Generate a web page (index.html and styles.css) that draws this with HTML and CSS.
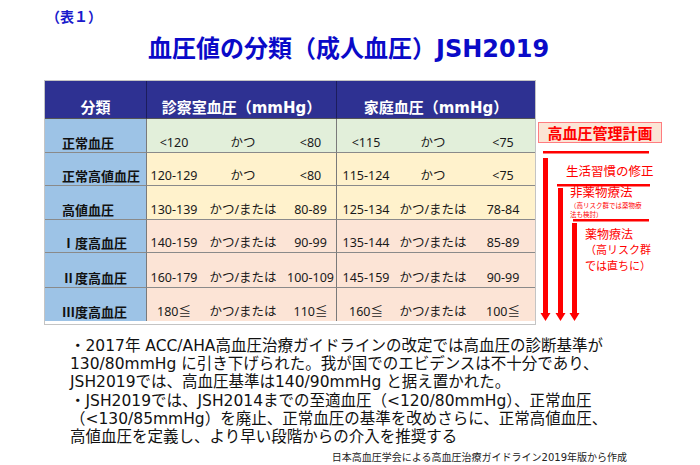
FILE: index.html
```html
<!DOCTYPE html>
<html lang="ja">
<head>
<meta charset="utf-8">
<link rel="stylesheet" href="styles.css">
</head>
<body>
<div class="page">
  <p class="tag">（表１）</p>
  <h1 class="title">血圧値の分類（成人血圧）JSH2019</h1>
  <div class="main">
    <div class="bp">
      <div class="hd cat">分類</div>
      <div class="hd">診察室血圧（mmHg）</div>
      <div class="hd last">家庭血圧（mmHg）</div>

      <div class="lbl">正常血圧</div>
      <div class="d green"><div class="vals office"><span>&lt;120</span><span>かつ</span><span>&lt;80</span></div></div>
      <div class="d green last"><div class="vals home"><span>&lt;115</span><span>かつ</span><span>&lt;75</span></div></div>

      <div class="lbl">正常高値血圧</div>
      <div class="d yellow"><div class="vals office"><span>120-129</span><span>かつ</span><span>&lt;80</span></div></div>
      <div class="d yellow last"><div class="vals home"><span>115-124</span><span>かつ</span><span>&lt;75</span></div></div>

      <div class="lbl">高値血圧</div>
      <div class="d yellow"><div class="vals office"><span>130-139</span><span>かつ/または</span><span>80-89</span></div></div>
      <div class="d yellow last"><div class="vals home"><span>125-134</span><span>かつ/または</span><span>78-84</span></div></div>

      <div class="lbl">Ⅰ度高血圧</div>
      <div class="d peach"><div class="vals office"><span>140-159</span><span>かつ/または</span><span>90-99</span></div></div>
      <div class="d peach last"><div class="vals home"><span>135-144</span><span>かつ/または</span><span>85-89</span></div></div>

      <div class="lbl">Ⅱ度高血圧</div>
      <div class="d peach"><div class="vals office"><span>160-179</span><span>かつ/または</span><span>100-109</span></div></div>
      <div class="d peach last"><div class="vals home"><span>145-159</span><span>かつ/または</span><span>90-99</span></div></div>

      <div class="lbl bottom">Ⅲ度高血圧</div>
      <div class="d peach bottom"><div class="vals office"><span>180≦</span><span>かつ/または</span><span>110≦</span></div></div>
      <div class="d peach last bottom"><div class="vals home"><span>160≦</span><span>かつ/または</span><span>100≦</span></div></div>
    </div>

    <div class="plan">
      <svg class="arrows" width="165" height="245" viewBox="0 0 165 245">
        <g fill="#ff0000">
          <rect x="7" y="71" width="106" height="2.5"/>
          <rect x="7" y="78" width="5" height="156"/>
          <polygon points="4.5,233 14.5,233 9.5,241"/>
          <rect x="21" y="104" width="93" height="2.5"/>
          <rect x="22" y="108" width="5" height="126"/>
          <polygon points="19.5,233 29.5,233 24.5,241"/>
          <rect x="37" y="139" width="76" height="2.5"/>
          <rect x="36" y="143" width="5" height="91"/>
          <polygon points="33.5,233 43.5,233 38.5,241"/>
        </g>
      </svg>
      <div class="plan-title">高血圧管理計画</div>
      <div class="step s1">生活習慣の修正</div>
      <div class="step s2">非薬物療法</div>
      <div class="note-small">（高リスク群では薬物療<br>法も検討）</div>
      <div class="step s3">薬物療法</div>
      <div class="note-s3">（高リスク群<br>では直ちに）</div>
    </div>
  </div>

  <div class="notes">・2017年 ACC/AHA高血圧治療ガイドラインの改定では高血圧の診断基準が<br>130/80mmHg に引き下げられた。我が国でのエビデンスは不十分であり、<br>JSH2019では、高血圧基準は140/90mmHg と据え置かれた。<br>・JSH2019では、JSH2014までの至適血圧（&lt;120/80mmHg）、正常血圧<br>（&lt;130/85mmHg）を廃止、正常血圧の基準を改めさらに、正常高値血圧、<br>高値血圧を定義し、より早い段階からの介入を推奨する</div>
  <p class="source">日本高血圧学会による高血圧治療ガイドライン2019年版から作成</p>
</div>
</body>
</html>
```
FILE: styles.css
```css
* { box-sizing: border-box; }
html, body { margin: 0; background: #fff; }
body {
  width: 700px;
  height: 465px;
  overflow: hidden;
  font-family: "DejaVu Sans", "Noto Sans CJK JP", sans-serif;
  color: #111;
}
.page { padding-top: 8px; }
.tag {
  margin: 0 0 0 46px;
  font: bold 14px/16px "Noto Sans CJK JP", sans-serif;
  color: #1a1acc;
}
.title {
  margin: 10px 0 0 148px;
  font-size: 24px;
  line-height: 30px;
  font-weight: bold;
  color: #0a0ac8;
  white-space: nowrap;
}
.main {
  display: flex;
  margin: 16px 0 0 44px;
}
.bp {
  display: grid;
  grid-template-columns: 102px 190px 198px;
  grid-template-rows: 38px 34px 33px 34px 33px 35px 33px;
  border: 1px solid #c4c4c4;
  width: 492px;
}
.bp > div {
  display: flex;
  align-items: flex-end;
  border-right: 1px solid #7a7a7a;
  border-bottom: 1px solid #8a8a8a;
}
.bp > .last { border-right: none; }
.bp > .bottom { border-bottom: none; }
.hd {
  background: #2e3192;
  color: #fff;
  font-weight: bold;
  font-size: 15px;
  line-height: 18px;
  justify-content: center;
  padding-bottom: 1px;
  border-right-color: #1c1d5c !important;
  border-bottom-color: #555 !important;
}
.lbl {
  background: #9dc3e6;
  font: bold 13px/16px "Noto Sans CJK JP", sans-serif;
  color: #111;
  padding: 0 0 1px 17px;
  white-space: nowrap;
}
.d {
  font-family: "Noto Sans", "Noto Sans CJK JP", sans-serif;
  font-size: 12.5px;
  line-height: 16px;
  padding-bottom: 1px;
  color: #1a1a1a;
}
.green { background: #e2efda; }
.yellow { background: #fff2cc; }
.peach { background: #fce4d6; }
.vals {
  display: grid;
  width: 100%;
  text-align: center;
  white-space: nowrap;
}
.office { grid-template-columns: 54px 84px 51px; }
.home { grid-template-columns: 58px 76px 64px; }

.plan {
  position: relative;
  width: 165px;
  height: 245px;
  color: #ff0000;
  font-family: "Noto Sans CJK JP", sans-serif;
}
.arrows { position: absolute; left: 0; top: 0; }
.plan-title {
  position: absolute;
  left: 2px;
  top: 42px;
  width: 124px;
  height: 21px;
  background: #fbe5d6;
  border: 1px solid #ff7c80;
  font-weight: bold;
  font-size: 15px;
  line-height: 19px;
  text-align: center;
  white-space: nowrap;
}
.step {
  position: absolute;
  font-size: 12.5px;
  line-height: 15px;
  white-space: nowrap;
}
.s1 { left: 30px; top: 83px; }
.s2 { left: 34px; top: 104px; }
.s3 { left: 49px; top: 146px; font-size: 12px; }
.note-small {
  position: absolute;
  left: 34px;
  top: 121px;
  font-size: 6.5px;
  line-height: 9px;
  white-space: nowrap;
}
.note-s3 {
  position: absolute;
  left: 49px;
  top: 161px;
  font-size: 11px;
  line-height: 16px;
  white-space: nowrap;
}

.notes {
  margin: 12px 0 0 70px;
  font-size: 15.5px;
  line-height: 18.2px;
  white-space: nowrap;
  color: #111;
}
.source {
  margin: 6px 73px 0 0;
  text-align: right;
  font-size: 10px;
  line-height: 12px;
  color: #222;
}
```
